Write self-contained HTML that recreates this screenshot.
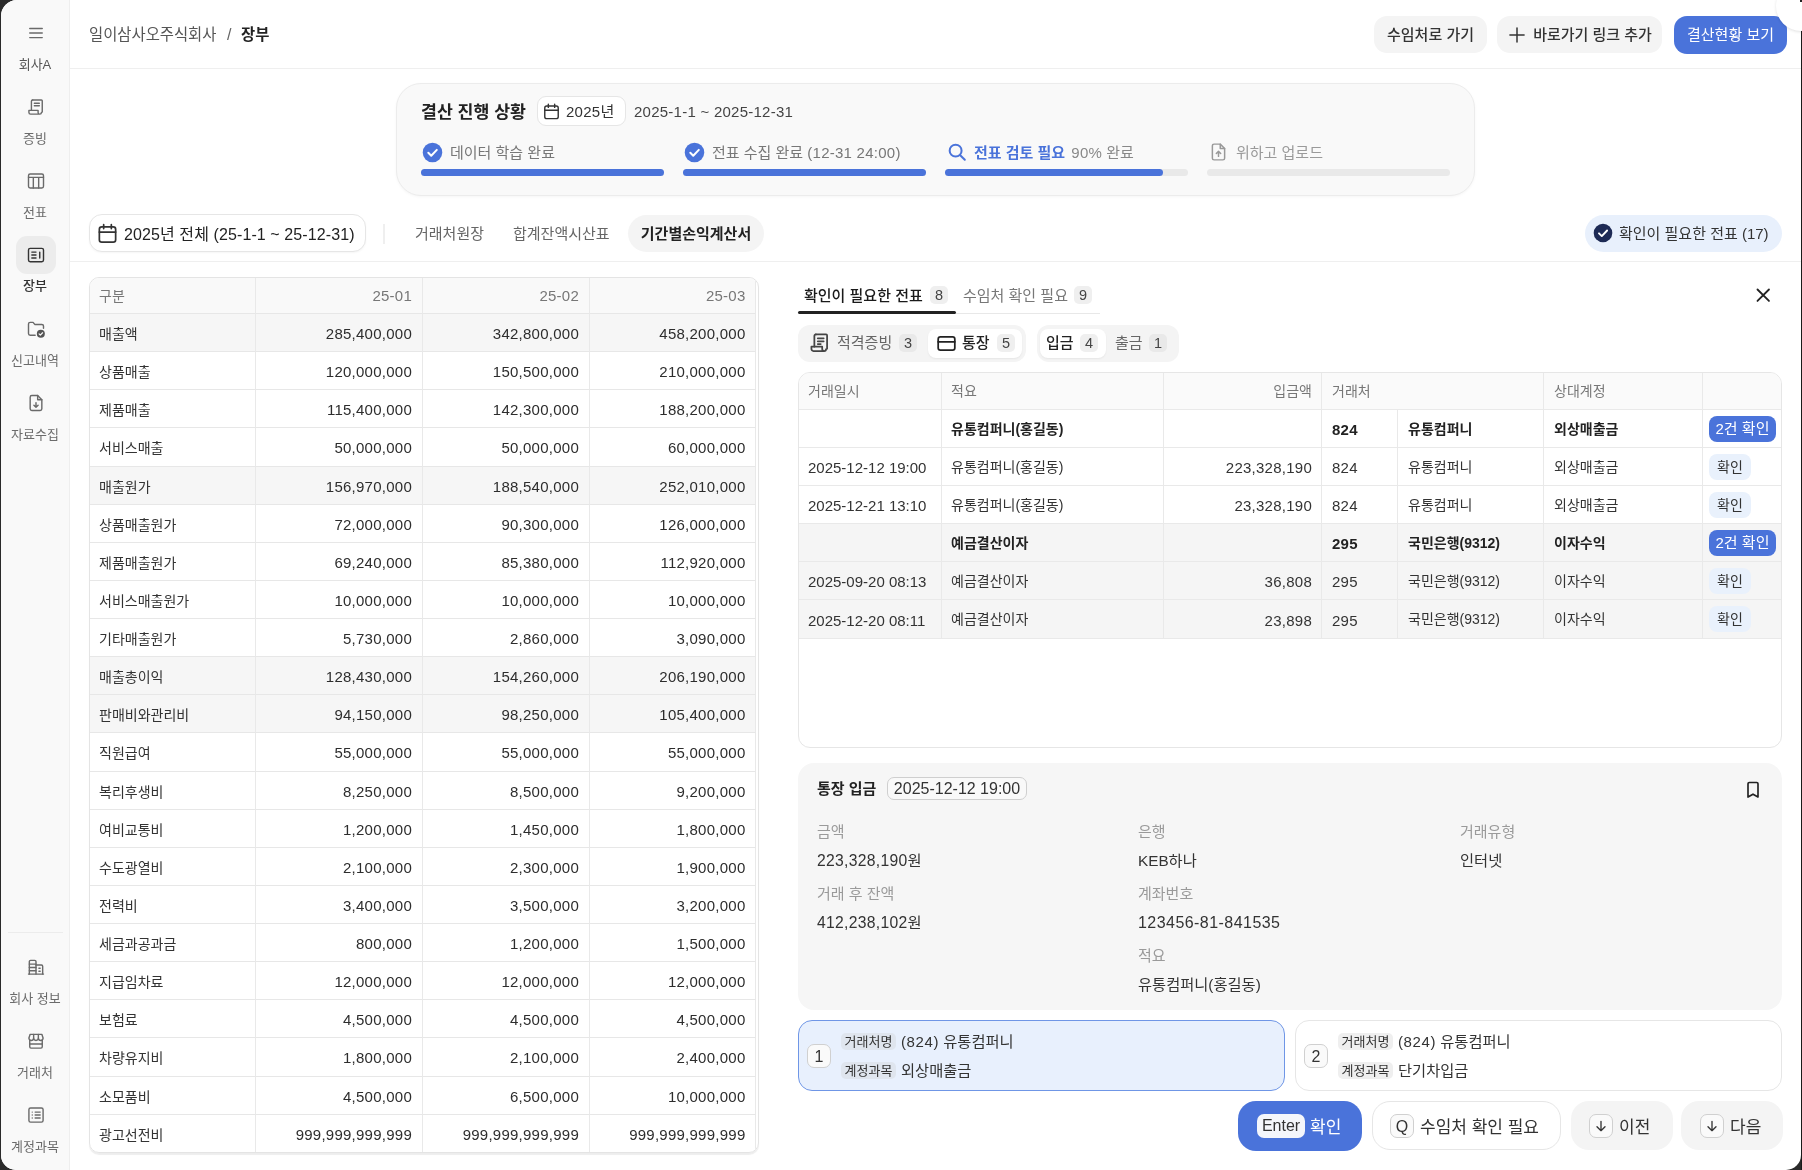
<!DOCTYPE html>
<html lang="ko"><head><meta charset="utf-8"><title>장부</title>
<style>
*{box-sizing:border-box;margin:0;padding:0}
html,body{width:1802px;height:1170px;overflow:hidden}
body{background:#2a2a2a;font-family:"Liberation Sans","Noto Sans CJK KR",sans-serif;font-size:14px;color:#2a2a2a;position:relative}
.abs{position:absolute}
#app{will-change:transform;position:absolute;left:1px;top:0;width:1800px;height:1170px;background:#fff;border-radius:16px 0 15px 15px;overflow:hidden}
#side{position:absolute;left:0;top:0;width:69px;height:1170px;background:#f9f9f9;border-right:1px solid #eeeeee}
.sit{position:absolute;left:0;width:68px;text-align:center;font-size:13px;color:#6b6b6b;line-height:16px}
.sic{position:absolute;left:24.5px;width:20px;height:20px}
.sic svg{width:20px;height:20px;display:block}
.n{font-size:15px;letter-spacing:.25px}
.pill{position:absolute;height:37px;border-radius:13px;background:#f4f4f4;font-size:15px;line-height:37px;text-align:center;color:#333;font-weight:500;white-space:nowrap}
svg{overflow:visible}
table{border-collapse:separate;border-spacing:0;table-layout:fixed}
#lt{position:absolute;left:88px;top:276.5px;width:670px;height:876.5px;border:1px solid #e4e4e4;border-radius:10px;overflow:hidden;box-shadow:0 2px 1px rgba(0,0,0,.07)}
#lt table{width:666px}
#lt td{height:38.14px;border-bottom:1px solid #e7e7e7;border-right:1px solid #e9e9e9;padding:1px 9px 0;font-size:14px;color:#333;white-space:nowrap;overflow:hidden}
#lt td.r{text-align:right;font-size:15px;letter-spacing:.25px;padding-right:10px;color:#2d2d2d;padding-top:2px;padding-bottom:0}
#lt tr.h td{background:#f9f9f9;color:#777;height:36.5px;padding-top:0;padding-bottom:0}
#lt tr:last-child td{border-bottom:none}
#lt tr.h td.r{color:#777}
#lt tr.b td{background:#f6f6f6}
#lt td:last-child{padding-right:9.5px}
#rt{position:absolute;left:797px;top:372px;width:984px;height:376px;border:1px solid #e6e6e6;border-radius:12px;overflow:hidden;background:#fff}
#rt table{width:982px}
#rt td{height:38.1px;border-bottom:1px solid #e9e9e9;border-right:1px solid #e9e9e9;padding:0 0 0 9px;font-size:14px;color:#333;white-space:nowrap;overflow:hidden}
#rt td.r{text-align:right;padding-right:9px}
#rt td{padding-bottom:2px}
#rt td.n{font-size:15px;letter-spacing:.25px;padding-top:2px;padding-bottom:0}
#rt td.p{padding-left:10px}
#rt td.n:first-child{letter-spacing:0}
#rt td.nb{border-right-color:transparent}
#rt tr.h td{background:#fafafa;color:#777;height:37px;padding-bottom:2px}
#rt tr.g td{background:#f5f5f5}
#rt tr.bd td{font-weight:700;color:#222}
#rt td:last-child{border-right:none;padding-left:6px;padding-bottom:0}
.b1{display:inline-block;height:26px;line-height:26px;border-radius:8px;background:#4a73da;color:#fff;font-size:15px;padding:0 6.5px;font-weight:400;vertical-align:middle}
.b2{display:inline-block;height:26px;line-height:26px;border-radius:8px;background:#e9f1fc;color:#333;font-size:14px;padding:0 8px;font-weight:400;vertical-align:middle}
.bdg{display:inline-block;min-width:18px;height:18px;line-height:18px;border-radius:5px;background:#efefef;color:#444;font-size:14.5px;text-align:center;padding:0 4px;vertical-align:middle}
.lab{position:absolute;font-size:15px;color:#9a9a9a;line-height:20px;white-space:nowrap}
.val{position:absolute;font-size:15.3px;color:#333;line-height:20px;white-space:nowrap}
.tag{position:absolute;height:17px;line-height:17px;border-radius:5px;background:#dfe5ee;font-size:13px;color:#333;padding:0 3.5px;white-space:nowrap}
.key{position:absolute;height:24px;line-height:23px;border-radius:7px;border:1px solid #d0d0d0;background:#fafafa;text-align:center;font-size:16px;color:#333}
.t{position:absolute;white-space:nowrap}
.nn{font-size:16px;letter-spacing:.45px}
.na{font-size:15.7px;letter-spacing:.3px}
</style></head>
<body>
<div id="app">
<div id="side">
<div class="sic" style="top:23px"><svg viewBox="0 0 24 24" fill="none" stroke="#6a6a6a" stroke-width="1.7" stroke-linecap="round" stroke-linejoin="round"><path d="M4.5 6.5h15M4.5 12h15M4.5 17.5h15"/></svg></div>
<div class="sit" style="top:56.5px;color:#555">회사A</div>
<div class="sic" style="top:97px"><svg viewBox="0 0 24 24" fill="none" stroke="#6a6a6a" stroke-width="1.7" stroke-linecap="round" stroke-linejoin="round"><path d="M8 3.5h10.5a1 1 0 0 1 1 1V18"/><path d="M8 3.5a1.5 1.5 0 0 0-1.500 1.500V16"/><path d="M3.500 16h11v2.500a2 2 0 0 0 4 0 2 2 0 0 1-2 2H5.500a2 2 0 0 1-2-2z"/><path d="M10 7.500h6M10 10.500h6"/></svg></div>
<div class="sit" style="top:130.5px;">증빙</div>
<div class="sic" style="top:171px"><svg viewBox="0 0 24 24" fill="none" stroke="#6a6a6a" stroke-width="1.7" stroke-linecap="round" stroke-linejoin="round"><rect x="3" y="3.600" width="18" height="16.800" rx="2"/><path d="M3 7.600h18M8.800 7.600v12.800M15.200 7.600v12.800"/></svg></div>
<div class="sit" style="top:204.5px;">전표</div>
<div class="abs" style="left:15px;top:236px;width:40px;height:38px;border-radius:11px;background:#ececec"></div>
<div class="sic" style="top:245px"><svg viewBox="0 0 24 24" fill="none" stroke="#333" stroke-width="1.7" stroke-linecap="round" stroke-linejoin="round"><rect x="3" y="4" width="18" height="16" rx="2"/><path d="M7 8.500h5M7 12h5M7 15.500h5M16.500 8.500v7"/></svg></div>
<div class="sit" style="top:277.5px;color:#333;font-weight:500">장부</div>
<div class="sic" style="top:319px"><svg viewBox="0 0 24 24" fill="none" stroke="#6a6a6a" stroke-width="1.7" stroke-linecap="round" stroke-linejoin="round"><path d="M11 19.500H5a2 2 0 0 1-2-2V6a2 2 0 0 1 2-2h3.500l2 2.500H19a2 2 0 0 1 2 2V11"/><circle cx="17.800" cy="17.800" r="4.800" fill="#555" stroke="none"/><path d="M15.700 17.900l1.500 1.500 2.700-2.900" stroke="#f9f9f9" stroke-width="1.400"/></svg></div>
<div class="sit" style="top:352.5px;">신고내역</div>
<div class="sic" style="top:393px"><svg viewBox="0 0 24 24" fill="none" stroke="#6a6a6a" stroke-width="1.7" stroke-linecap="round" stroke-linejoin="round"><path d="M14 3H7a2 2 0 0 0-2 2v14a2 2 0 0 0 2 2h10a2 2 0 0 0 2-2V8z"/><path d="M14 3v5h5"/><path d="M12 11.500v5.500M9.500 14.700l2.500 2.500 2.500-2.500"/></svg></div>
<div class="sit" style="top:426.5px;">자료수집</div>
<div class="abs" style="left:7px;top:932px;width:55px;height:1px;background:#ececec"></div>
<div class="sic" style="top:957px"><svg viewBox="0 0 24 24" fill="none" stroke="#6a6a6a" stroke-width="1.7" stroke-linecap="round" stroke-linejoin="round"><path d="M4 20.500V5.500a1.500 1.500 0 0 1 1.500-1.500h5a1.500 1.500 0 0 1 1.500 1.500v15"/><path d="M12 9.500h6.500a1.500 1.500 0 0 1 1.500 1.500v9.500"/><path d="M3 20.500h18"/><path d="M4 8.500h8M4 12.500h8M4 16.500h8M15.500 13.500h1.500M15.500 17h1.500"/></svg></div>
<div class="sit" style="top:990.5px;">회사 정보</div>
<div class="sic" style="top:1031px"><svg viewBox="0 0 24 24" fill="none" stroke="#6a6a6a" stroke-width="1.7" stroke-linecap="round" stroke-linejoin="round"><path d="M4.500 11v8a1.500 1.500 0 0 0 1.500 1.500h12a1.500 1.500 0 0 0 1.500-1.500v-8"/><path d="M3.500 8.500l1.500-4.500h14l1.500 4.500a2.800 2.800 0 0 1-5.670 0 2.800 2.800 0 0 1-5.660 0 2.800 2.800 0 0 1-5.670 0z"/><path d="M9.170 4v4.500M14.830 4v4.500"/><path d="M4.500 15.500h15"/></svg></div>
<div class="sit" style="top:1064.5px;">거래처</div>
<div class="sic" style="top:1105px"><svg viewBox="0 0 24 24" fill="none" stroke="#6a6a6a" stroke-width="1.7" stroke-linecap="round" stroke-linejoin="round"><rect x="3.500" y="3.500" width="17" height="17" rx="2"/><path d="M7.500 8.500h.01M7.500 12h.01M7.500 15.500h.01M11 8.500h6M11 12h6M11 15.500h6"/></svg></div>
<div class="sit" style="top:1138.5px;">계정과목</div>
</div>
<div id="top">
<div class="t" style="left:88px;top:25px;font-size:15.400px;line-height:20px;color:#555">일이삼사오주식회사</div>
<div class="t" style="left:226px;top:25px;font-size:16px;line-height:20px;color:#666">/</div>
<div class="t" style="left:240px;top:25px;font-size:15.400px;line-height:20px;color:#222;font-weight:700">장부</div>
<div class="pill" style="left:1373px;top:16px;width:113px">수임처로 가기</div>
<div class="pill" style="left:1496px;top:16px;width:165px"><svg viewBox="0 0 24 24" fill="none" stroke="#333" stroke-width="1.8" stroke-linecap="round" style="width:20px;height:20px;vertical-align:-4.500px;margin-right:6px"><path d="M12 3.500v17M3.500 12h17"/></svg>바로가기 링크 추가</div>
<div class="pill" style="left:1673px;top:15.500px;height:38px;line-height:38px;width:113px;background:#4a73da;color:#fff;font-weight:400;border-radius:13px">결산현황 보기</div>
<div class="abs" style="left:69px;top:68px;width:1731px;height:1px;background:#efefef"></div>
</div>
<div id="prog">
<div class="abs" style="left:395px;top:83px;width:1079px;height:113px;border-radius:25px;background:#f9f9f9;border:1px solid #ececec;box-shadow:0 1px 3px rgba(0,0,0,.04)"></div>
<div class="t" style="left:420px;top:99.500px;font-size:17.300px;line-height:24px;font-weight:700;color:#222">결산 진행 상황</div>
<div class="abs" style="left:536px;top:95.500px;width:89px;height:30px;border-radius:9px;background:#fff;border:1px solid #e6e6e6"></div>
<svg viewBox="0 0 24 24" fill="none" stroke="#333" stroke-width="1.8" stroke-linecap="round" stroke-linejoin="round" style="width:19px;height:19px;position:absolute;left:541px;top:101.5px"><rect x="3.500" y="5" width="17" height="16" rx="2.500"/><path d="M3.500 10.500h17M8 2.800v4M16 2.800v4"/></svg>
<div class="t" style="left:565px;top:101px;font-size:15px;line-height:21px;color:#333"><span class="n">2025</span>년</div>
<div class="t n" style="left:633px;top:101px;line-height:21px;color:#444">2025-1-1 ~ 2025-12-31</div>
<div class="abs" style="left:420px;top:141px;width:243px;height:40px"><svg viewBox="0 0 20 20" style="position:absolute;left:0.500px;top:0.500px;width:21px;height:21px"><circle cx="10" cy="10" r="9.300" fill="#4a73da"/><path d="M6 10.300l2.800 2.800 5.300-5.600" fill="none" stroke="#fff" stroke-width="1.900" stroke-linecap="round" stroke-linejoin="round"/></svg><div class="t" style="left:29px;top:2px;font-size:15px;line-height:20px;color:#777">데이터 학습 완료</div><div class="abs" style="left:0;top:28px;width:243px;height:7px;border-radius:3.500px;background:#e9e9e9"><div style="width:243px;height:7px;border-radius:3.500px;background:#4a73da"></div></div></div>
<div class="abs" style="left:682px;top:141px;width:243px;height:40px"><svg viewBox="0 0 20 20" style="position:absolute;left:0.500px;top:0.500px;width:21px;height:21px"><circle cx="10" cy="10" r="9.300" fill="#4a73da"/><path d="M6 10.300l2.800 2.800 5.300-5.600" fill="none" stroke="#fff" stroke-width="1.900" stroke-linecap="round" stroke-linejoin="round"/></svg><div class="t" style="left:29px;top:2px;font-size:15px;line-height:20px;color:#777">전표 수집 완료 <span class="n">(12-31 24:00)</span></div><div class="abs" style="left:0;top:28px;width:243px;height:7px;border-radius:3.500px;background:#e9e9e9"><div style="width:243px;height:7px;border-radius:3.500px;background:#4a73da"></div></div></div>
<div class="abs" style="left:944px;top:141px;width:243px;height:40px"><svg viewBox="0 0 24 24" fill="none" stroke="#4a73da" stroke-width="2.200" stroke-linecap="round" style="position:absolute;left:1px;top:0;width:22px;height:22px"><circle cx="10.500" cy="10.500" r="6.500"/><path d="M15.500 15.500l5 5"/></svg><div class="t" style="left:29px;top:2px;font-size:15px;line-height:20px;color:#888"><b style="color:#4a73da;font-weight:700">전표 검토 필요</b> <span class="n" style="margin-left:2px">90%</span> 완료</div><div class="abs" style="left:0;top:28px;width:243px;height:7px;border-radius:3.500px;background:#e9e9e9"><div style="width:218px;height:7px;border-radius:3.500px;background:#4a73da"></div></div></div>
<div class="abs" style="left:1206px;top:141px;width:243px;height:40px"><svg viewBox="0 0 24 24" fill="none" stroke="#999" stroke-width="1.700" stroke-linecap="round" stroke-linejoin="round" style="position:absolute;left:1px;top:0;width:21px;height:22px"><path d="M14 3H7a2 2 0 0 0-2 2v14a2 2 0 0 0 2 2h10a2 2 0 0 0 2-2V8z"/><path d="M14 3v5h5"/><path d="M12 17v-5.500M9.500 13.800l2.500-2.500 2.500 2.500"/></svg><div class="t" style="left:29px;top:2px;font-size:15px;line-height:20px;color:#9a9a9a">위하고 업로드</div><div class="abs" style="left:0;top:28px;width:243px;height:7px;border-radius:3.500px;background:#e9e9e9"><div style="width:0px;height:7px;border-radius:3.500px;background:#4a73da"></div></div></div>
</div>
<div id="filt">
<div class="abs" style="left:88px;top:214px;width:277px;height:38px;border-radius:13px;background:#fff;border:1px solid #e6e6e6;box-shadow:0 1px 2px rgba(0,0,0,.04)"></div>
<svg viewBox="0 0 24 24" fill="none" stroke="#333" stroke-width="1.8" stroke-linecap="round" stroke-linejoin="round" style="width:23px;height:23px;position:absolute;left:95px;top:222px"><rect x="3.500" y="5" width="17" height="16" rx="2.500"/><path d="M3.500 10.500h17M8 2.800v4M16 2.800v4"/></svg>
<div class="t" style="left:123px;top:223.500px;font-size:16px;line-height:22px;color:#222;letter-spacing:.1px">2025년 전체 (25-1-1 ~ 25-12-31)</div>
<div class="abs" style="left:382px;top:224px;width:1.500px;height:20px;background:#efefef"></div>
<div class="t" style="left:414px;top:224px;font-size:15px;line-height:20px;color:#666">거래처원장</div>
<div class="t" style="left:512px;top:224px;font-size:15px;line-height:20px;color:#666">합계잔액시산표</div>
<div class="pill" style="left:627px;top:215px;width:136px;color:#222;font-weight:700;border-radius:19px">기간별손익계산서</div>
<div class="pill" style="left:1584px;top:215px;width:197px;border-radius:19px;background:#e8f0fc;color:#333;font-weight:400;text-align:left;padding-left:34px">확인이 필요한 전표 (17)</div>
<svg viewBox="0 0 20 20" style="position:absolute;left:1592px;top:223px;width:20px;height:20px"><circle cx="10" cy="10" r="9.300" fill="#1d2a55"/><path d="M6 10.300l2.800 2.800 5.300-5.600" fill="none" stroke="#fff" stroke-width="1.900" stroke-linecap="round" stroke-linejoin="round"/></svg>
<div class="abs" style="left:69px;top:261px;width:1731px;height:1px;background:#efefef"></div>
</div>
<div id="lt"><table><colgroup><col style="width:166px"><col style="width:167px"><col style="width:167px"><col style="width:166px"></colgroup>
<tr class="h"><td>구분</td><td class="r">25-01</td><td class="r">25-02</td><td class="r">25-03</td></tr>
<tr class="b"><td>매출액</td><td class="r">285,400,000</td><td class="r">342,800,000</td><td class="r">458,200,000</td></tr>
<tr><td>상품매출</td><td class="r">120,000,000</td><td class="r">150,500,000</td><td class="r">210,000,000</td></tr>
<tr><td>제품매출</td><td class="r">115,400,000</td><td class="r">142,300,000</td><td class="r">188,200,000</td></tr>
<tr><td>서비스매출</td><td class="r">50,000,000</td><td class="r">50,000,000</td><td class="r">60,000,000</td></tr>
<tr class="b"><td>매출원가</td><td class="r">156,970,000</td><td class="r">188,540,000</td><td class="r">252,010,000</td></tr>
<tr><td>상품매출원가</td><td class="r">72,000,000</td><td class="r">90,300,000</td><td class="r">126,000,000</td></tr>
<tr><td>제품매출원가</td><td class="r">69,240,000</td><td class="r">85,380,000</td><td class="r">112,920,000</td></tr>
<tr><td>서비스매출원가</td><td class="r">10,000,000</td><td class="r">10,000,000</td><td class="r">10,000,000</td></tr>
<tr><td>기타매출원가</td><td class="r">5,730,000</td><td class="r">2,860,000</td><td class="r">3,090,000</td></tr>
<tr class="b"><td>매출총이익</td><td class="r">128,430,000</td><td class="r">154,260,000</td><td class="r">206,190,000</td></tr>
<tr class="b"><td>판매비와관리비</td><td class="r">94,150,000</td><td class="r">98,250,000</td><td class="r">105,400,000</td></tr>
<tr><td>직원급여</td><td class="r">55,000,000</td><td class="r">55,000,000</td><td class="r">55,000,000</td></tr>
<tr><td>복리후생비</td><td class="r">8,250,000</td><td class="r">8,500,000</td><td class="r">9,200,000</td></tr>
<tr><td>여비교통비</td><td class="r">1,200,000</td><td class="r">1,450,000</td><td class="r">1,800,000</td></tr>
<tr><td>수도광열비</td><td class="r">2,100,000</td><td class="r">2,300,000</td><td class="r">1,900,000</td></tr>
<tr><td>전력비</td><td class="r">3,400,000</td><td class="r">3,500,000</td><td class="r">3,200,000</td></tr>
<tr><td>세금과공과금</td><td class="r">800,000</td><td class="r">1,200,000</td><td class="r">1,500,000</td></tr>
<tr><td>지급임차료</td><td class="r">12,000,000</td><td class="r">12,000,000</td><td class="r">12,000,000</td></tr>
<tr><td>보험료</td><td class="r">4,500,000</td><td class="r">4,500,000</td><td class="r">4,500,000</td></tr>
<tr><td>차량유지비</td><td class="r">1,800,000</td><td class="r">2,100,000</td><td class="r">2,400,000</td></tr>
<tr><td>소모품비</td><td class="r">4,500,000</td><td class="r">6,500,000</td><td class="r">10,000,000</td></tr>
<tr><td>광고선전비</td><td class="r">999,999,999,999</td><td class="r">999,999,999,999</td><td class="r">999,999,999,999</td></tr>
</table></div>
<div id="right">
<div class="t" style="left:803px;top:286px;font-size:15px;line-height:20px;color:#1a1a1a;font-weight:500">확인이 필요한 전표</div>
<div class="abs bdg" style="left:929px;top:286px;width:18px;padding:0">8</div>
<div class="abs" style="left:797px;top:310.500px;width:158px;height:3.200px;border-radius:1.600px;background:#222"></div>
<div class="abs" style="left:955px;top:313px;width:144px;height:1px;background:#e8e8e8"></div>
<div class="t" style="left:962px;top:286px;font-size:15px;line-height:20px;color:#777">수임처 확인 필요</div>
<div class="abs bdg" style="left:1073px;top:286px;width:18px;padding:0">9</div>
<svg viewBox="0 0 24 24" fill="none" stroke="#222" stroke-width="2" stroke-linecap="round" style="position:absolute;left:1751px;top:284px;width:22px;height:22px"><path d="M6 6l12.500 12.500M18.500 6l-12.500 12.500"/></svg>
<div class="abs" style="left:797px;top:325px;width:228px;height:37px;border-radius:12px;background:#f4f4f4"></div>
<svg viewBox="0 0 24 24" fill="none" stroke="#444" stroke-width="1.800" stroke-linecap="round" stroke-linejoin="round" style="position:absolute;left:807px;top:331px;width:23.500px;height:23.500px"><path d="M8 3.500h10.500a1 1 0 0 1 1 1V18"/><path d="M8 3.500a1.500 1.500 0 0 0-1.500 1.500V16"/><path d="M3.500 16h11v2.500a2 2 0 0 0 4 0 2 2 0 0 1-2 2H5.500a2 2 0 0 1-2-2z"/><path d="M10 7.500h6M10 10.500h6M10 13.300h3"/></svg><div class="t" style="left:836px;top:333px;font-size:15px;line-height:20px;color:#666">적격증빙</div>
<div class="abs bdg" style="left:898px;top:334px;width:18px;padding:0;background:#e9e9e9">3</div>
<div class="abs" style="left:927px;top:329px;width:94px;height:29px;border-radius:8px;background:#fff;box-shadow:0 1px 2px rgba(0,0,0,.06)"></div>
<svg viewBox="0 0 24 24" fill="none" stroke="#222" stroke-width="2" stroke-linecap="round" stroke-linejoin="round" style="position:absolute;left:935px;top:333px;width:21px;height:21px"><rect x="2.500" y="4.500" width="19" height="15" rx="2.500"/><path d="M2.500 10h19"/></svg><div class="t" style="left:961px;top:333px;font-size:15px;line-height:20px;color:#222;font-weight:500">통장</div>
<div class="abs bdg" style="left:996px;top:334px;width:18px;padding:0">5</div>
<div class="abs" style="left:1036px;top:325px;width:142px;height:37px;border-radius:12px;background:#f4f4f4"></div>
<div class="abs" style="left:1039px;top:329px;width:66px;height:29px;border-radius:8px;background:#fff;box-shadow:0 1px 2px rgba(0,0,0,.06)"></div>
<div class="t" style="left:1045px;top:333px;font-size:15px;line-height:20px;color:#222;font-weight:500">입금</div>
<div class="abs bdg" style="left:1079px;top:334px;width:18px;padding:0">4</div>
<div class="t" style="left:1114px;top:333px;font-size:15px;line-height:20px;color:#666">출금</div>
<div class="abs bdg" style="left:1148px;top:334px;width:18px;padding:0;background:#e9e9e9">1</div>
<div id="rt"><table><colgroup><col style="width:143px"><col style="width:222px"><col style="width:158px"><col style="width:76px"><col style="width:146px"><col style="width:159px"><col style="width:78px"></colgroup>
<tr class="h"><td>거래일시</td><td>적요</td><td class="r">입금액</td><td colspan="2" class="p">거래처</td><td class="p">상대계정</td><td></td></tr>
<tr class="bd"><td class="n"></td><td>유통컴퍼니(홍길동)</td><td class="r n"></td><td class="n p">824</td><td class="p">유통컴퍼니</td><td class="p">외상매출금</td><td><span class="b1">2건 확인</span></td></tr>
<tr><td class="n">2025-12-12 19:00</td><td>유통컴퍼니(홍길동)</td><td class="r n">223,328,190</td><td class="n p">824</td><td class="p">유통컴퍼니</td><td class="p">외상매출금</td><td><span class="b2">확인</span></td></tr>
<tr><td class="n">2025-12-21 13:10</td><td>유통컴퍼니(홍길동)</td><td class="r n">23,328,190</td><td class="n p">824</td><td class="p">유통컴퍼니</td><td class="p">외상매출금</td><td><span class="b2">확인</span></td></tr>
<tr class="bd g"><td class="n"></td><td>예금결산이자</td><td class="r n"></td><td class="n p">295</td><td class="p">국민은행(9312)</td><td class="p">이자수익</td><td><span class="b1">2건 확인</span></td></tr>
<tr class="g"><td class="n">2025-09-20 08:13</td><td>예금결산이자</td><td class="r n">36,808</td><td class="n p">295</td><td class="p">국민은행(9312)</td><td class="p">이자수익</td><td><span class="b2">확인</span></td></tr>
<tr class="g"><td class="n">2025-12-20 08:11</td><td>예금결산이자</td><td class="r n">23,898</td><td class="n p">295</td><td class="p">국민은행(9312)</td><td class="p">이자수익</td><td><span class="b2">확인</span></td></tr>
</table></div>
<div class="abs" style="left:797px;top:763px;width:984px;height:247px;border-radius:16px;background:#f6f6f6"></div>
<div class="t" style="left:816px;top:779px;font-size:15px;line-height:20px;font-weight:700;color:#222">통장 입금</div>
<div class="abs n" style="left:886px;top:777px;width:140px;height:23px;border-radius:7px;border:1px solid #cfcfcf;background:#f9f9f9;font-size:16px;line-height:21px;text-align:center;color:#333;letter-spacing:0">2025-12-12 19:00</div>
<svg viewBox="0 0 24 24" fill="none" stroke="#222" stroke-width="2" stroke-linecap="round" stroke-linejoin="round" style="position:absolute;left:1742px;top:780px;width:20px;height:20px"><path d="M6 4.500a1.500 1.500 0 0 1 1.500-1.500h9a1.500 1.500 0 0 1 1.500 1.500v16l-6-3.500-6 3.500z"/></svg>
<div class="lab" style="left:816px;top:822px">금액</div><div class="val" style="left:816px;top:850.5px"><span class="na">223,328,190</span>원</div>
<div class="lab" style="left:816px;top:884px">거래 후 잔액</div><div class="val" style="left:816px;top:912.5px"><span class="na">412,238,102</span>원</div>
<div class="lab" style="left:1137px;top:822px">은행</div><div class="val" style="left:1137px;top:850.5px">KEB하나</div>
<div class="lab" style="left:1137px;top:884px">계좌번호</div><div class="val nn" style="left:1137px;top:912.5px">123456-81-841535</div>
<div class="lab" style="left:1137px;top:946px">적요</div><div class="val" style="left:1137px;top:974.5px">유통컴퍼니(홍길동)</div>
<div class="lab" style="left:1459px;top:822px">거래유형</div><div class="val" style="left:1459px;top:850.5px">인터넷</div>
<div class="abs" style="left:797px;top:1020px;width:487px;height:71px;border-radius:14px;background:#e8f0fd;border:1.500px solid #6f96e6"></div>
<div class="abs key" style="left:806px;top:1044px;width:24px;height:24px;font-size:16px">1</div>
<div class="tag" style="left:840px;top:1033px">거래처명</div><div class="t" style="left:900px;top:1032px;font-size:15.3px;line-height:20px;color:#333"><span class="n" style="letter-spacing:.6px">(824)</span> 유통컴퍼니</div>
<div class="tag" style="left:840px;top:1062px">계정과목</div><div class="t" style="left:900px;top:1061px;font-size:15.3px;line-height:20px;color:#333">외상매출금</div>
<div class="abs" style="left:1294px;top:1020px;width:487px;height:71px;border-radius:14px;background:#fff;border:1px solid #e6e6e6"></div>
<div class="abs key" style="left:1303px;top:1044px;width:24px;height:24px;font-size:16px">2</div>
<div class="tag" style="left:1337px;top:1033px;background:#efefef">거래처명</div><div class="t" style="left:1397px;top:1032px;font-size:15.3px;line-height:20px;color:#333"><span class="n" style="letter-spacing:.6px">(824)</span> 유통컴퍼니</div>
<div class="tag" style="left:1337px;top:1062px;background:#efefef">계정과목</div><div class="t" style="left:1397px;top:1061px;font-size:15.3px;line-height:20px;color:#333">단기차입금</div>
<div class="abs" style="left:1237px;top:1101px;width:124px;height:49.500px;border-radius:18px;background:#4a73da"></div>
<div class="abs key" style="left:1256px;top:1114px;width:48px;border:none;background:#f4f6fb;line-height:24px;font-size:16px">Enter</div>
<div class="t" style="left:1309px;top:1115.500px;font-size:17px;line-height:24px;color:#fff">확인</div>
<div class="abs" style="left:1371px;top:1101px;width:189px;height:49px;border-radius:18px;background:#fff;border:1px solid #e6e6e6"></div>
<div class="abs key" style="left:1389px;top:1114px;width:24px">Q</div>
<div class="t" style="left:1419px;top:1115.500px;font-size:17px;line-height:24px;color:#333">수임처 확인 필요</div>
<div class="abs" style="left:1570px;top:1101px;width:102px;height:49px;border-radius:18px;background:#f4f4f4"></div>
<div class="abs key" style="left:1588px;top:1114px;width:24px"><svg viewBox="0 0 24 24" fill="none" stroke="#333" stroke-width="2" stroke-linecap="round" stroke-linejoin="round" style="width:16px;height:16px;position:absolute;left:3px;top:3px"><path d="M12 5v14M6 13l6 6 6-6"/></svg></div>
<div class="t" style="left:1618px;top:1115.500px;font-size:17px;line-height:24px;color:#333">이전</div>
<div class="abs" style="left:1680px;top:1101px;width:102px;height:49px;border-radius:18px;background:#f4f4f4"></div>
<div class="abs key" style="left:1699px;top:1114px;width:24px"><svg viewBox="0 0 24 24" fill="none" stroke="#333" stroke-width="2" stroke-linecap="round" stroke-linejoin="round" style="width:16px;height:16px;position:absolute;left:3px;top:3px"><path d="M12 5v14M6 13l6 6 6-6"/></svg></div>
<div class="t" style="left:1729px;top:1115.500px;font-size:17px;line-height:24px;color:#333">다음</div>
</div>
</div>
<div class="abs" style="left:1776px;top:-19px;width:50px;height:50px;border-radius:25px;background:#fff;box-shadow:0 1px 3px rgba(0,0,0,.12)"></div>
<div class="abs" style="left:1801px;top:31px;width:1px;height:1139px;background:#1a1a1a"></div>
<div class="abs" style="left:1800px;top:0;width:2px;height:2px;background:#222"></div>
</body></html>
